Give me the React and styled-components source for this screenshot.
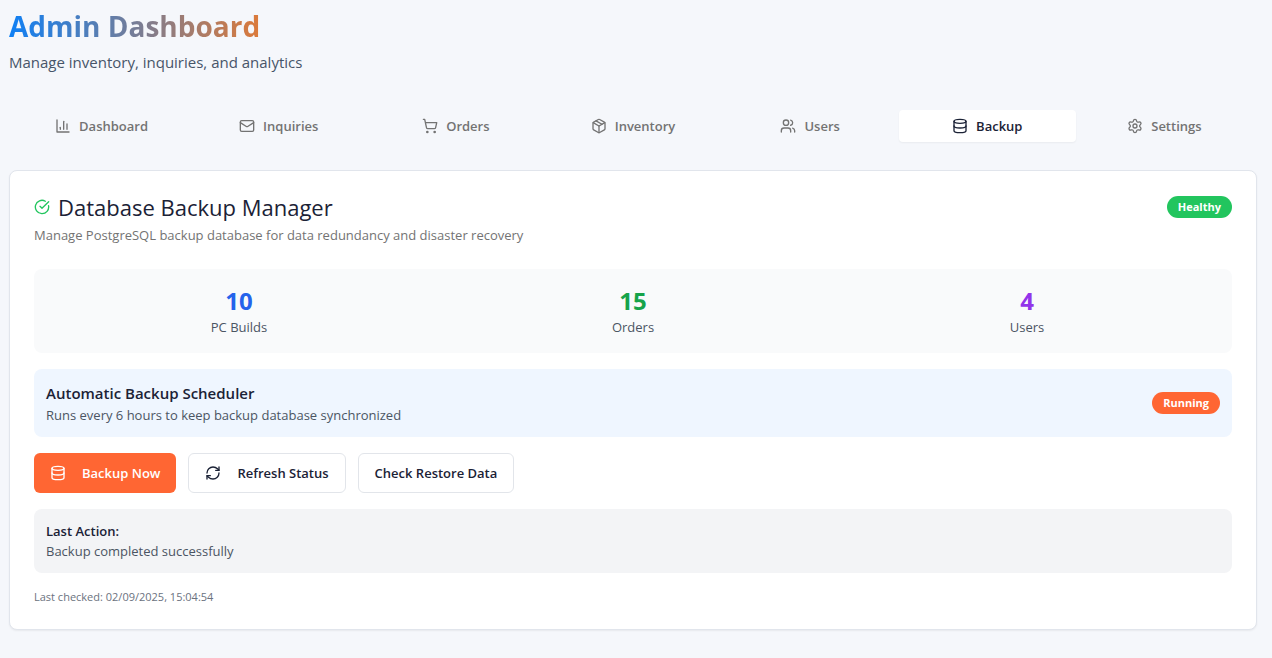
import React from "react";
import styled, { createGlobalStyle } from "styled-components";
import { Mail, ShoppingCart, Package, Database, Settings, RefreshCw, CircleCheckBig } from "lucide-react";

const GlobalStyle = createGlobalStyle`
  *, *::before, *::after { box-sizing: border-box; }
  body {
    margin: 0;
    background: #f5f7fb;
    color: #1b2236;
    font-family: "Segoe UI", "Open Sans", "Noto Sans", sans-serif;
    font-size: 13px;
    line-height: 20px;
  }
  h1, h2, h3, p, dl, dd, dt { margin: 0; }
  button { font: inherit; cursor: pointer; }
`;

const Page = styled.main`
  padding: 8px 15px 28px 9px;
`;

const PageTitle = styled.h1`
  width: fit-content;
  font-size: 28px;
  line-height: 36px;
  font-weight: 700;
  color: transparent;
  background: linear-gradient(90deg, #0f80f5, #dc7a3a);
  background-clip: text;
`;

const PageSubtitle = styled.p`
  margin-top: 6px;
  font-size: 15px;
  line-height: 24px;
  color: #475569;
`;

const TabList = styled.div`
  display: grid;
  grid-template-columns: repeat(7, 1fr);
  margin: 32px 0 24px;
  padding: 4px;
`;

const Tab = styled.button`
  display: flex;
  align-items: center;
  justify-content: center;
  gap: 8px;
  height: 32px;
  padding: 0 12px;
  border: 0;
  border-radius: 4px;
  font-weight: 600;
  color: ${(p) => (p.$active ? "#1b2236" : "#737373")};
  background: ${(p) => (p.$active ? "#fff" : "transparent")};
  box-shadow: ${(p) => (p.$active ? "0 1px 2px rgba(0, 0, 0, 0.05)" : "none")};
`;

const Card = styled.section`
  padding: 24px;
  border: 1px solid #e1e5ec;
  border-radius: 8px;
  background: #fff;
  box-shadow: 0 1px 2px rgba(0, 0, 0, 0.06);
`;

const CardHeader = styled.header`
  display: grid;
  gap: 6px;
  margin-bottom: 24px;
`;

const TitleRow = styled.div`
  display: flex;
  align-items: center;
  justify-content: space-between;
  height: 24px;
`;

const TitleGroup = styled.div`
  display: flex;
  align-items: center;
  gap: 8px;
  svg { color: #22c55e; }
`;

const CardTitle = styled.h2`
  font-size: 22px;
  line-height: 28px;
  font-weight: 500;
`;

const CardDescription = styled.p`
  color: #737373;
`;

const Badge = styled.span`
  padding: 3px 11px;
  border-radius: 11px;
  font-size: 11px;
  line-height: 16px;
  font-weight: 700;
  color: #fff;
  background: ${(p) => p.$color};
`;

const CardBody = styled.div`
  display: flex;
  flex-direction: column;
  gap: 16px;
`;

const Stats = styled.dl`
  display: grid;
  grid-template-columns: repeat(3, 1fr);
  gap: 16px;
  padding: 16px;
  border-radius: 8px;
  background: #f9fafb;
`;

const Stat = styled.div`
  display: flex;
  flex-direction: column-reverse;
  text-align: center;
`;

const StatValue = styled.dd`
  font-size: 24px;
  line-height: 32px;
  font-weight: 700;
  color: ${(p) => p.$color};
`;

const StatLabel = styled.dt`
  color: #4b5563;
`;

const Panel = styled.div`
  display: flex;
  align-items: center;
  justify-content: space-between;
  padding: 12px;
  border-radius: 8px;
  background: ${(p) => p.$color};
`;

const PanelTitle = styled.h3`
  font-size: ${(p) => (p.$small ? 13 : 15)}px;
  line-height: ${(p) => (p.$small ? 20 : 24)}px;
  font-weight: 600;
`;

const PanelText = styled.p`
  color: #4b5563;
`;

const Actions = styled.div`
  display: flex;
  flex-wrap: wrap;
  gap: 12px;
`;

const Button = styled.button`
  display: flex;
  align-items: center;
  gap: 16px;
  height: 40px;
  padding: 0 16px;
  border: ${(p) => (p.$primary ? "0" : "1px solid #e2e5ea")};
  border-radius: 6px;
  font-weight: 600;
  color: ${(p) => (p.$primary ? "#fff" : "#1b2236")};
  background: ${(p) => (p.$primary ? "#ff6633" : "#fff")};
`;

const Timestamp = styled.p`
  font-size: 11px;
  line-height: 16px;
  color: #6b7280;
`;

const LineIcon = ({ children }) => (
  <svg width="16" height="16" viewBox="0 0 24 24" fill="none" stroke="currentColor" strokeWidth="2" strokeLinecap="round" strokeLinejoin="round" aria-hidden="true">
    {children}
  </svg>
);

const BarsIcon = () => (
  <LineIcon>
    <path d="M3 3v18h18" />
    <path d="M18 17V9" />
    <path d="M13 17V5" />
    <path d="M8 17v-3" />
  </LineIcon>
);

const UsersIcon = () => (
  <LineIcon>
    <path d="M16 21v-2a4 4 0 0 0-4-4H6a4 4 0 0 0-4 4v2" />
    <circle cx="9" cy="7" r="4" />
    <path d="M22 21v-2a4 4 0 0 0-3-3.87" />
    <path d="M16 3.13a4 4 0 0 1 0 7.75" />
  </LineIcon>
);

const tabs = [
  ["Dashboard", BarsIcon],
  ["Inquiries", Mail],
  ["Orders", ShoppingCart],
  ["Inventory", Package],
  ["Users", UsersIcon],
  ["Backup", Database],
  ["Settings", Settings],
];

const stats = [
  ["PC Builds", 10, "#2563eb"],
  ["Orders", 15, "#16a34a"],
  ["Users", 4, "#9333ea"],
];

export default function App() {
  return (
    <>
      <GlobalStyle />
      <Page>
        <PageTitle>Admin Dashboard</PageTitle>
        <PageSubtitle>Manage inventory, inquiries, and analytics</PageSubtitle>
        <TabList role="tablist">
          {tabs.map(([label, Icon]) => (
            <Tab key={label} type="button" role="tab" aria-selected={label === "Backup"} $active={label === "Backup"}>
              <Icon size={16} />
              {label}
            </Tab>
          ))}
        </TabList>
        <Card>
          <CardHeader>
            <TitleRow>
              <TitleGroup>
                <CircleCheckBig size={16} />
                <CardTitle>Database Backup Manager</CardTitle>
              </TitleGroup>
              <Badge $color="#22c55e">Healthy</Badge>
            </TitleRow>
            <CardDescription>Manage PostgreSQL backup database for data redundancy and disaster recovery</CardDescription>
          </CardHeader>
          <CardBody>
            <Stats>
              {stats.map(([label, value, color]) => (
                <Stat key={label}>
                  <StatLabel>{label}</StatLabel>
                  <StatValue $color={color}>{value}</StatValue>
                </Stat>
              ))}
            </Stats>
            <Panel $color="#eff6ff">
              <div>
                <PanelTitle>Automatic Backup Scheduler</PanelTitle>
                <PanelText>Runs every 6 hours to keep backup database synchronized</PanelText>
              </div>
              <Badge $color="#ff6633">Running</Badge>
            </Panel>
            <Actions>
              <Button type="button" $primary>
                <Database size={16} />
                Backup Now
              </Button>
              <Button type="button">
                <RefreshCw size={16} />
                Refresh Status
              </Button>
              <Button type="button">Check Restore Data</Button>
            </Actions>
            <Panel $color="#f3f4f6">
              <div>
                <PanelTitle $small>Last Action:</PanelTitle>
                <PanelText>Backup completed successfully</PanelText>
              </div>
            </Panel>
            <Timestamp>Last checked: 02/09/2025, 15:04:54</Timestamp>
          </CardBody>
        </Card>
      </Page>
    </>
  );
}
